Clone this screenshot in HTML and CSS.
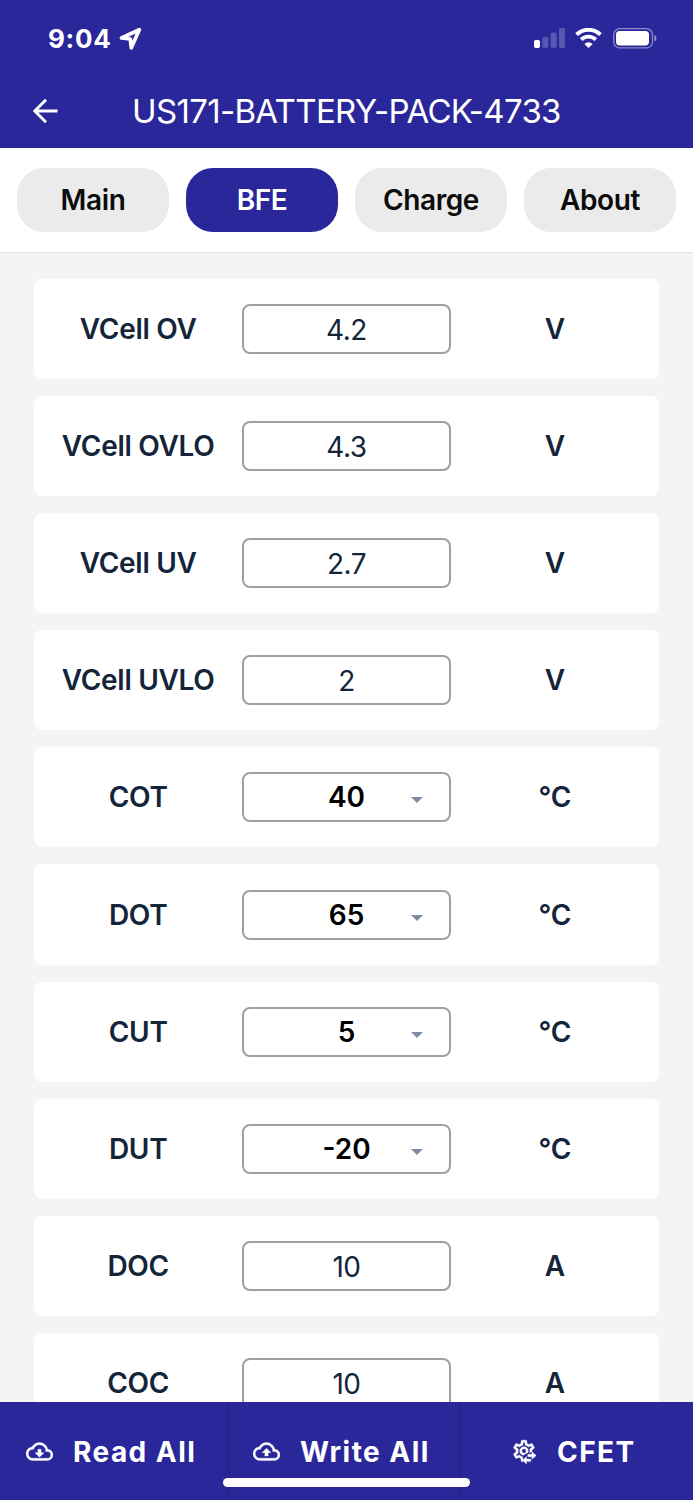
FILE: index.html
```html
<!DOCTYPE html>
<html lang="en">
<head>
  <meta charset="UTF-8">
  <meta name="viewport" content="width=device-width, initial-scale=1.0">
  <title>US171-BATTERY-PACK-4733</title>
  <link rel="stylesheet" href="styles.css">
</head>
<body>
  <div class="app">
    <header class="header">
      <div class="status-bar">
        <span class="time">9:04</span>
        <svg class="location" width="24" height="24" viewBox="0 0 24 24">
          <path d="M2.500 12L20.300 3.700L12.300 21.800L11.300 13Z" fill="none" stroke="#fff" stroke-width="3.700" stroke-linejoin="round"/>
        </svg>
        <svg class="signal" width="32" height="20" viewBox="0 0 32 20" fill="#fff">
          <rect x="0" y="12" width="6" height="8" rx="1.7"/>
          <rect x="8.3" y="9" width="6" height="11" rx="1.7" opacity="0.22"/>
          <rect x="16.7" y="4.5" width="6" height="15.5" rx="1.7" opacity="0.22"/>
          <rect x="25" y="0" width="6" height="20" rx="1.7" opacity="0.22"/>
        </svg>
        <svg class="wifi" width="27" height="20" viewBox="0 0 27 20">
          <path d="M1.6 6.6a17 17 0 0 1 23.8 0M6.2 11.6a10.4 10.4 0 0 1 14.6 0" fill="none" stroke="#fff" stroke-width="3.9"/>
          <path d="M13.5 20L9.4 15.9a5.9 5.9 0 0 1 8.2 0Z" fill="#fff"/>
        </svg>
        <svg class="battery" width="44" height="21" viewBox="0 0 44 21">
          <rect x="0.7" y="0.7" width="38.8" height="19.2" rx="6" fill="none" stroke="#fff" stroke-width="1.3" opacity="0.45"/>
          <rect x="3" y="3" width="33" height="14.4" rx="3.6" fill="#fff"/>
          <path d="M41.4 7v6.6c2.700-1 2.700-5.600 0-6.600z" fill="#fff" opacity="0.5"/>
        </svg>
      </div>
      <div class="title-bar">
        <svg class="back" width="26" height="26" viewBox="0 0 26 26">
          <path d="M24.500 13H2M13 1.800L1.800 13L13 24.200" fill="none" stroke="#fff" stroke-width="2.900"/>
        </svg>
        <h1 class="title">US171-BATTERY-PACK-4733</h1>
      </div>
    </header>

    <nav class="tabs">
      <button class="tab">Main</button>
      <button class="tab active">BFE</button>
      <button class="tab">Charge</button>
      <button class="tab">About</button>
    </nav>

    <main class="list">
      <div class="row">
        <div class="label">VCell OV</div>
        <div class="field">4.2</div>
        <div class="unit">V</div>
      </div>
      <div class="row">
        <div class="label">VCell OVLO</div>
        <div class="field">4.3</div>
        <div class="unit">V</div>
      </div>
      <div class="row">
        <div class="label">VCell UV</div>
        <div class="field">2.7</div>
        <div class="unit">V</div>
      </div>
      <div class="row">
        <div class="label">VCell UVLO</div>
        <div class="field">2</div>
        <div class="unit">V</div>
      </div>
      <div class="row">
        <div class="label">COT</div>
        <div class="field select">40</div>
        <div class="unit">°C</div>
      </div>
      <div class="row">
        <div class="label">DOT</div>
        <div class="field select">65</div>
        <div class="unit">°C</div>
      </div>
      <div class="row">
        <div class="label">CUT</div>
        <div class="field select">5</div>
        <div class="unit">°C</div>
      </div>
      <div class="row">
        <div class="label">DUT</div>
        <div class="field select">-20</div>
        <div class="unit">°C</div>
      </div>
      <div class="row">
        <div class="label">DOC</div>
        <div class="field">10</div>
        <div class="unit">A</div>
      </div>
      <div class="row">
        <div class="label">COC</div>
        <div class="field">10</div>
        <div class="unit">A</div>
      </div>
    </main>

    <footer class="footer">
      <button class="action read">
        <svg width="27" height="27" viewBox="0 0 24 24">
          <path d="M8 13h2.550v-3h2.900v3H16l-4 4zM19.350 10.040C18.670 6.590 15.640 4 12 4 9.110 4 6.600 5.640 5.350 8.040 2.340 8.360 0 10.910 0 14a6 6 0 0 0 6 6h13a5 5 0 0 0 5-5c0-2.640-2.050-4.780-4.650-4.960zM19 18H6a4 4 0 0 1 0-8h.71C7.370 7.690 9.480 6 12 6a5.500 5.500 0 0 1 5.500 5.500v.5H19a3 3 0 0 1 0 6z"/>
        </svg>
        <span>Read All</span>
      </button>
      <button class="action write">
        <svg width="27" height="27" viewBox="0 0 24 24">
          <path d="M8 13h2.550v3h2.900v-3H16l-4-4zM19.350 10.040C18.670 6.590 15.640 4 12 4 9.110 4 6.600 5.640 5.350 8.040 2.340 8.360 0 10.910 0 14a6 6 0 0 0 6 6h13a5 5 0 0 0 5-5c0-2.640-2.050-4.780-4.650-4.960zM19 18H6a4 4 0 0 1 0-8h.71C7.370 7.690 9.480 6 12 6a5.500 5.500 0 0 1 5.500 5.500v.5H19a3 3 0 0 1 0 6z"/>
        </svg>
        <span>Write All</span>
      </button>
      <button class="action cfet">
        <svg width="26" height="26" viewBox="0 0 24 24">
          <path d="M12 8A4 4 0 0 1 16 12A4 4 0 0 1 12 16A4 4 0 0 1 8 12A4 4 0 0 1 12 8M12 10A2 2 0 0 0 10 12A2 2 0 0 0 12 14A2 2 0 0 0 14 12A2 2 0 0 0 12 10M10 22C9.750 22 9.540 21.820 9.500 21.580L9.130 18.930C8.500 18.680 7.960 18.340 7.440 17.940L4.950 18.950C4.730 19.030 4.460 18.950 4.340 18.730L2.340 15.270C2.210 15.050 2.270 14.780 2.460 14.630L4.570 12.970L4.500 12L4.570 11L2.460 9.370C2.270 9.220 2.210 8.950 2.340 8.730L4.340 5.270C4.460 5.050 4.730 4.960 4.950 5.050L7.440 6.050C7.960 5.660 8.500 5.320 9.130 5.070L9.500 2.420C9.540 2.180 9.750 2 10 2H14C14.250 2 14.460 2.180 14.500 2.420L14.870 5.070C15.500 5.320 16.040 5.660 16.560 6.050L19.050 5.050C19.270 4.960 19.540 5.050 19.660 5.270L21.660 8.730C21.790 8.950 21.730 9.220 21.540 9.370L19.430 11L19.500 12L19.430 13L21.540 14.630C21.730 14.780 21.790 15.050 21.660 15.270L19.660 18.730C19.540 18.950 19.270 19.040 19.050 18.950L16.560 17.950C16.040 18.340 15.500 18.680 14.870 18.930L14.500 21.580C14.460 21.820 14.250 22 14 22H10M11.250 4L10.880 6.610C9.680 6.860 8.620 7.500 7.850 8.390L5.440 7.350L4.690 8.650L6.800 10.200C6.400 11.370 6.400 12.640 6.800 13.800L4.680 15.360L5.430 16.660L7.860 15.620C8.630 16.500 9.680 17.140 10.870 17.380L11.240 20H12.760L13.130 17.390C14.320 17.140 15.370 16.500 16.140 15.620L18.570 16.660L19.320 15.360L17.200 13.810C17.600 12.640 17.600 11.370 17.200 10.200L19.310 8.650L18.560 7.350L16.150 8.390C15.380 7.500 14.320 6.860 13.120 6.620L12.750 4H11.250Z"/>
          <path class="cutout" d="M11 16.700L14.500 13.800L17 14L19 12.700H24V24H11Z"/>
          <path d="M23.300 16.200L19.300 12.700V15H15.500V17.400H19.300V19.700ZM10.500 20.600L14.300 17.100V19.400H18.200V21.800H14.300V24Z"/>
        </svg>
        <span>CFET</span>
      </button>
      <div class="home-indicator"></div>
    </footer>
  </div>
</body>
</html>
```
FILE: styles.css
```css
* {
  box-sizing: border-box;
}

body {
  margin: 0;
  font-family: Inter, "Liberation Sans", sans-serif;
  background-color: #f4f4f4;
}

button {
  border: none;
  padding: 0;
  font-family: inherit;
}

svg {
  display: block;
  flex-shrink: 0;
}

.app {
  display: flex;
  flex-direction: column;
  width: 693px;
  height: 1500px;
  overflow: hidden;
}

.header {
  flex-shrink: 0;
  height: 147.5px;
  background-color: #2a279b;
  color: #fff;
}

.status-bar {
  display: flex;
  align-items: center;
  height: 76px;
  padding: 0 36px 0 48px;
}

.time {
  width: 63px;
  font-size: 26px;
  font-weight: 700;
  letter-spacing: 0.7px;
  white-space: nowrap;
}

.location {
  margin-left: 8px;
}

.signal {
  margin-left: auto;
}

.wifi {
  margin-left: 9px;
}

.battery {
  margin-left: 11px;
}

.title-bar {
  display: flex;
  align-items: center;
  height: 69px;
  padding-left: 33px;
}

.title {
  width: 430px;
  margin: 0 0 0 73px;
  font-size: 33px;
  font-weight: 400;
  letter-spacing: -0.67px;
  white-space: nowrap;
}

.tabs {
  display: grid;
  grid-template-columns: repeat(4, 152px);
  gap: 17px;
  flex-shrink: 0;
  height: 105px;
  padding: 20px 17px;
  background-color: #fff;
  border-bottom: 1px solid #e2e2e2;
}

.tab {
  height: 64px;
  border-radius: 27px;
  background-color: #ebebeb;
  color: #0c0c0c;
  font-size: 28px;
  font-weight: 600;
  letter-spacing: -0.4px;
}

.tab.active {
  background-color: #2a279b;
  color: #fff;
}

.list {
  flex: 1;
  min-height: 0;
  overflow: hidden;
  padding: 26px 34px 0;
}

.row {
  display: grid;
  grid-template-columns: repeat(3, 1fr);
  align-items: center;
  height: 100.2px;
  margin-bottom: 17px;
  border-radius: 8px;
  background-color: #fff;
  color: #14253a;
  font-size: 28px;
  text-align: center;
}

.label,
.unit {
  font-weight: 600;
  letter-spacing: -0.3px;
  white-space: nowrap;
}

.field {
  height: 50px;
  border: 2px solid #a0a0a0;
  border-radius: 8px;
  line-height: 48px;
  letter-spacing: -0.5px;
}

.select {
  position: relative;
  color: #000;
  font-weight: 600;
  line-height: 47px;
  letter-spacing: 0;
}

/* dropdown arrow */
.select::after {
  content: "";
  position: absolute;
  top: 23px;
  right: 25.5px;
  border: 6px solid transparent;
  border-top-color: #7b8ca3;
  border-bottom: none;
}

.footer {
  position: relative;
  display: grid;
  grid-template-columns: 230px 231px 232px;
  flex-shrink: 0;
  height: 98px;
  overflow: hidden;
  background-color: #2a279b;
}

.action {
  display: flex;
  align-items: center;
  background-color: #2a279b;
  box-shadow: 0 0 5px rgba(0, 0, 0, 0.25);
  color: #fff;
  font-size: 28px;
  font-weight: 700;
  letter-spacing: 1.45px;
  white-space: nowrap;
}

.action svg {
  fill: #fff;
  stroke: #fff;
  stroke-width: 0.3px;
}

.action .cutout {
  fill: #2a279b;
  stroke: none;
}

.read {
  padding-left: 26px;
}

.write {
  padding-left: 23px;
}

.cfet {
  padding-left: 50px;
}

.action span {
  margin-left: 20px;
  padding-top: 1px;
}

.home-indicator {
  position: absolute;
  left: 223px;
  bottom: 13px;
  width: 247px;
  height: 9px;
  border-radius: 5px;
  background-color: #fff;
}
```
